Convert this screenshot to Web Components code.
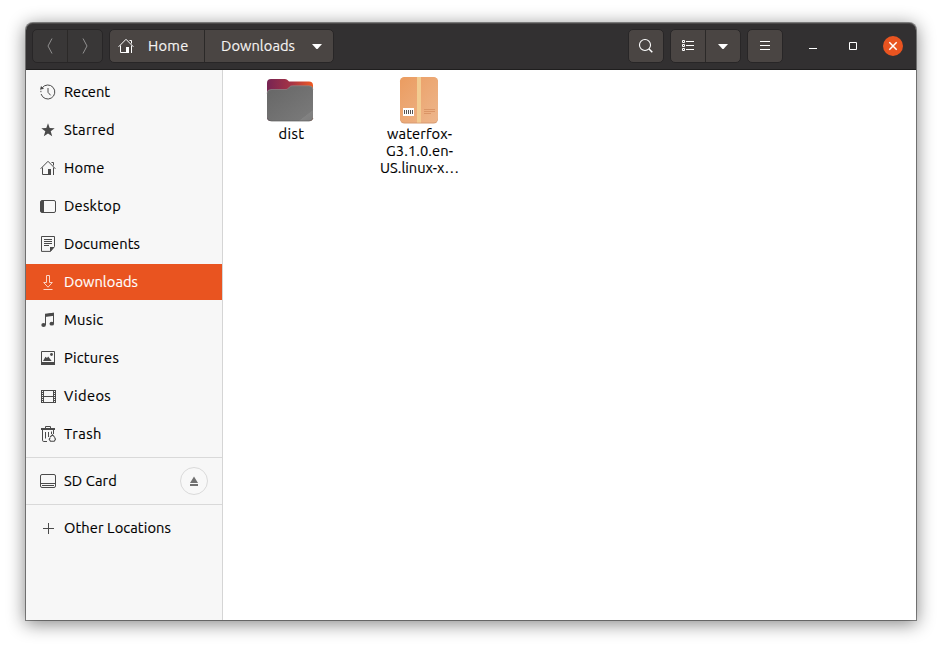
<!DOCTYPE html>
<html lang="en"><head><meta charset="utf-8"><title>Downloads</title>
<style>
html,body{margin:0;height:100%;background:#fff;overflow:hidden}
body{font-family:Ubuntu,"Noto Sans","Open Sans",sans-serif;font-size:14.667px;color:#000}
</style></head><body>
<file-window></file-window>
<script>
const ICONS={
 prev:'<path d="M10 .5 6 8l4 7.5" fill="none" stroke="currentColor"/>',
 next:'<path d="M6 .5 10 8l-4 7.500" fill="none" stroke="currentColor"/>',
 home:'<path d="M.6 8.800 8 1.300l7.400 7.500M2.500 7.500v7H9M13.500 7.500v7.500M11.500 2.500h2v3" fill="none" stroke="currentColor"/><path d="M8 9h3v6H8z" fill="currentColor"/>',
 recent:'<path d="M2.2 3.8A7 7 0 1 1 1.1 10M8 4v4.3l2.6 3" fill="none" stroke="currentColor"/><path d="M0 5.8 1 2l3 2.700z" fill="currentColor"/><path d="M.9 6.800v1.400" stroke="currentColor"/>',
 star:'<path d="m8 1.3 1.7 4.8 5 .1-4 3.1 1.5 5L8 11.4l-4.2 2.9 1.5-5-4-3.1 5-.1z" fill="currentColor"/>',
 desktop:'<rect x=".5" y="2.5" width="15" height="12" rx="1.5" fill="none" stroke="currentColor"/><path d="M1 3h3v11H1z" fill="currentColor"/>',
 documents:'<path d="M1.500.5h13v10l-4 4.900h-9z" fill="none" stroke="currentColor"/><path d="M4 3.500h8M4 5.500h8M4 7.500h8M4 9.500h5" stroke="currentColor"/><path d="M10 11h4.500L10 15.800z" fill="currentColor"/>',
 downloads:'<path d="M6.5 1.5h3v7h2.8L8 13.2 3.7 8.5h2.8zM3.5 15.5h9" fill="none" stroke="currentColor"/>',
 music:'<path d="M5.5 13V2.8l8-1.6v10" fill="none" stroke="currentColor"/><path d="M5 1.8 14 .8v3L5 5z" fill="currentColor"/><ellipse cx="3.6" cy="13" rx="2.3" ry="1.9" fill="currentColor"/><ellipse cx="11.8" cy="11.7" rx="2.3" ry="1.9" fill="currentColor"/>',
 pictures:'<path d="M1.5 1.5h13v12h-13z" fill="none" stroke="currentColor"/><path d="M1 12h14v3H1zM3 11l2.5-4.2L7 8l1.2-1.6L11.7 11z" fill="currentColor"/><circle cx="11.5" cy="4.5" r="1.4" fill="currentColor"/>',
 videos:'<path d="M3.500 2v13M13.500 2v13M1 2.500h15M4 8.500h9M1 14.500h15" fill="none" stroke="currentColor"/><path d="M1.500 2v13M15.500 2v13" stroke="currentColor"/><path d="M2.500 4v10M14.500 4v10" stroke="currentColor" stroke-dasharray="1 1"/>',
 trash:'<path d="M5.500 2V.5h5V2M2.500 4v10.200q0 1.300 1.300 1.300H7M13.500 4v4M5.500 6v6.500M8.500 6v5M11.500 5.500V8" fill="none" stroke="currentColor"/><path d="M1 2h14v2h-1V4H2V4H1z" fill="currentColor"/><path d="M10 11.200 12.500 8.800l2 2.200M14.500 11.200l1 2-1.300 2h-3.700l-1.300-2 1-1.500" fill="none" stroke="currentColor" stroke-width="1.100"/>',
 card:'<rect x=".5" y="1.5" width="15" height="13" rx="1.5" fill="none" stroke="currentColor"/><path d="M1 10.5h14M2 12.5h12" stroke="currentColor"/>',
 plus:'<path d="M8.5 3v11M3 8.5h11" stroke="currentColor"/>',
 eject:'<path d="M8 3.5 12 10H4zM4 11h8v2H4z" fill="currentColor"/>',
 search:'<circle cx="7" cy="7" r="5.5" fill="none" stroke="currentColor" stroke-width="1.1"/><path d="m11 11 3.3 3.3" stroke="currentColor" stroke-width="1.5"/>',
 list:'<path d="M2.5 2.5h2v2h-2zM2.5 6.5h2v2h-2zM2.5 10.5h2v2h-2zM6 3.5h8M6 7.5h8M6 11.5h8" fill="none" stroke="currentColor"/>',
 down:'<path d="M3 6h10l-4 4.5Q8 11.5 7 10.5z" fill="currentColor"/>',
 menu:'<path d="M3 3.5h10M3 7.5h10M3 11.5h10" stroke="currentColor"/>',
 min:'<path d="M4 10.5h8" stroke="currentColor"/>',
 max:'<path d="M4.5 4.5h7v7h-7z" fill="none" stroke="currentColor"/>',
 close:'<path d="m4.3 4.3 7.4 7.4M11.7 4.3l-7.4 7.4" stroke="currentColor" stroke-width="1.5"/>'
};
function define(name,render,after){customElements.define(name,class extends HTMLElement{
 connectedCallback(){if(this.shadowRoot)return;this.attachShadow({mode:'open'}).innerHTML=render(this);if(after)after(this)}
})}
define('app-icon',e=>`<style>:host{display:block;width:16px;height:16px;flex:none}svg{display:block}</style><svg width="16" height="16" viewBox="0 0 16 16">${ICONS[e.getAttribute('name')]}</svg>`);
// Label whose letter spacing is adjusted to reach a given width.
define('fit-text',e=>`<style>:host{display:block;white-space:nowrap;line-height:17px;width:max-content;-webkit-text-stroke:.15px currentColor}span{display:inline-block}</style><span>${e.getAttribute('text')}</span>`,e=>{
 const s=e.shadowRoot.querySelector('span'),w=+e.getAttribute('w');
 s.style.letterSpacing=(w-s.getBoundingClientRect().width)/s.textContent.length+'px';
});
define('tool-group',()=>`<style>:host{display:flex;box-sizing:border-box;height:34px;border:1px solid #282627;border-radius:5px;background:#4a4543;color:#fff;overflow:hidden;flex:none}:host([off]){background:#393737;color:#919090}</style><slot></slot>`);
define('tool-button',()=>`<style>:host{display:flex;width:34px;height:32px;align-items:center;justify-content:center;flex:none}:host(:not(:first-child)){border-left:1px solid #2b2928}</style><slot></slot>`);
define('title-bar',()=>`<style>:host{display:flex;height:47px;box-sizing:border-box;padding:6px 13px 6px 6px;background:#323031;border-bottom:1px solid #1f1e1e;border-radius:7px 7px 0 0;box-shadow:inset 0 1px #4b4949;align-items:flex-start;color:#fff}
.path{margin-left:6px}.home{width:94px;justify-content:flex-start;gap:14px;box-sizing:border-box;padding-left:8px}.current{width:129px;box-sizing:border-box;justify-content:flex-start;padding-left:16px;gap:14px}.space{flex:1}.g{margin-left:6px}
.controls{display:flex;align-items:center;height:34px;margin-left:20px;gap:20px}.controls>*{width:20px;height:20px;display:flex;align-items:center;justify-content:center}.close{background:#e95420;border-radius:50%}fit-text{color:#f5f3f2;padding-bottom:2px}</style>
<tool-group off><tool-button><app-icon name="prev"></app-icon></tool-button><tool-button><app-icon name="next"></app-icon></tool-button></tool-group>
<tool-group class="path"><tool-button class="home"><app-icon name="home"></app-icon><fit-text text="Home" w="40.5"></fit-text></tool-button><tool-button class="current"><fit-text text="Downloads" w="74"></fit-text><app-icon name="down"></app-icon></tool-button></tool-group>
<div class="space"></div>
<tool-group><tool-button><app-icon name="search"></app-icon></tool-button></tool-group>
<tool-group class="g"><tool-button><app-icon name="list"></app-icon></tool-button><tool-button><app-icon name="down"></app-icon></tool-button></tool-group>
<tool-group class="g"><tool-button><app-icon name="menu"></app-icon></tool-button></tool-group>
<div class="controls"><span><app-icon name="min"></app-icon></span><span><app-icon name="max"></app-icon></span><span class="close"><app-icon name="close"></app-icon></span></div>`);
define('place-row',e=>`<style>:host{display:flex;height:36px;align-items:center;padding:0 14px;gap:8px}app-icon{color:#4a4a4a}fit-text{padding-bottom:2px}:host([active]){background:#e95420;color:#fff}:host([active]) app-icon{color:#fbd5c7}::slotted(*){margin-left:auto}</style><app-icon name="${e.getAttribute('icon')}"></app-icon><fit-text text="${e.getAttribute('label')}" w="${e.getAttribute('w')}"></fit-text><slot></slot>`);
define('eject-button',()=>`<style>:host{display:flex;box-sizing:border-box;width:28px;height:28px;border:1px solid #dadada;border-radius:50%;align-items:center;justify-content:center;background:#f8f8f8}app-icon{color:#717171}</style><app-icon name="eject"></app-icon>`);
define('place-list',()=>`<style>:host{display:flex;flex-direction:column;gap:2px;box-sizing:border-box;width:197px;padding-top:4px;background:#f7f7f7;border-right:1px solid #d5d5d5;flex:none}hr{box-sizing:border-box;width:100%;height:1px;border:0;background:#d9d9d9;margin:3px 0}</style>${[['recent','Recent',46],['star','Starred',51],['home','Home',40.5],['desktop','Desktop',57],['documents','Documents',76],['downloads','Downloads',74],['music','Music',39.5],['pictures','Pictures',55],['videos','Videos',47],['trash','Trash',38]].map(r=>`<place-row icon="${r[0]}" label="${r[1]}" w="${r[2]}"${r[0]=='downloads'?' active':''}></place-row>`).join('')}<hr><place-row icon="card" label="SD Card" w="53"><eject-button></eject-button></place-row><hr><place-row icon="plus" label="Other Locations" w="107"></place-row>`);
define('file-item',e=>`<style>:host{display:flex;flex-direction:column;align-items:center;width:128px}fit-text{padding-left:1px}</style><slot></slot>${e.getAttribute('lines').split('|').map(l=>{const[t,w]=l.split('~');return `<fit-text text="${t}" w="${w}"></fit-text>`}).join('')}`);
define('file-grid',()=>`<style>:host{display:flex;flex:1;align-items:flex-start;padding:6px 0 0 4px;background:#fff}svg{display:block}.folder{margin:0 2px 1px 0}.archive{margin-bottom:1px}</style>
<file-item lines="dist~26"><svg class="folder" width="48" height="48" viewBox="0 0 48 48"><defs><linearGradient id="a"><stop stop-color="#762453"/><stop offset=".55" stop-color="#a83545"/><stop offset="1" stop-color="#f05a22"/></linearGradient><linearGradient id="b" x2="1" y2="1"><stop stop-color="#666"/><stop offset=".84" stop-color="#787878"/><stop offset=".85" stop-color="#828282"/><stop offset="1" stop-color="#7c7c7c"/></linearGradient></defs><path d="M1 42V7q0-4 4-4h14q2 0 3 1.5l1 1h20q4 0 4 4V41q0 4-4 4H5q-4 0-4-4z" fill="url(#a)"/><path d="M1 17.5q0-4 4-4h15q1.5 0 2.5-1.5l1-1q1-1.2 3-1.2H43q4 0 4 4V41q0 4-4 4H5q-4 0-4-4z" fill="url(#b)"/><path d="M1 17.5q0-4 4-4h15q1.5 0 2.5-1.5l1-1q1-1.2 3-1.2H43q4 0 4 4" fill="none" stroke="#919191" stroke-width=".6"/><path d="M1.5 42q.5 3 4 3H43q3.500 0 4-3" fill="none" stroke="#606060" stroke-width=".7"/></svg></file-item>
<file-item lines="waterfox-~65|G3.1.0.en-~67|US.linux-x…~79"><svg class="archive" width="48" height="48" viewBox="0 0 48 48"><defs><linearGradient id="c" x2="1" y2="1"><stop stop-color="#eb9c60"/><stop offset="1" stop-color="#edb68c"/></linearGradient></defs><rect x="5" y="1.500" width="38" height="46" rx="4.500" fill="#d79a71"/><rect x="5" y="1" width="38" height="45.500" rx="4.500" fill="url(#c)"/><path d="M22 1h4v45.500h-4z" fill="#f2cc91"/><path d="M8 32h11v8H8z" fill="#fff"/><path d="M9.500 34v4M11.500 34v4M13.500 34v4M15.500 34v4M17.500 34v4" stroke="#555" stroke-width="1"/><path d="M29 33.500h11M29 35.500h11M29 37.500h7" stroke="#d58e60" stroke-width=".8"/></svg></file-item>`);
define('file-window',()=>`<style>:host{display:flex;flex-direction:column;box-sizing:border-box;width:890px;height:597px;margin:23px 26px;border-radius:7px 7px 0 0;box-shadow:0 0 0 1px rgba(0,0,0,.42),0 3px 18px 1px rgba(0,0,0,.48)}main{display:flex;flex:1}title-bar{flex:none}</style><title-bar></title-bar><main><place-list></place-list><file-grid></file-grid></main>`);
</script></body></html>
